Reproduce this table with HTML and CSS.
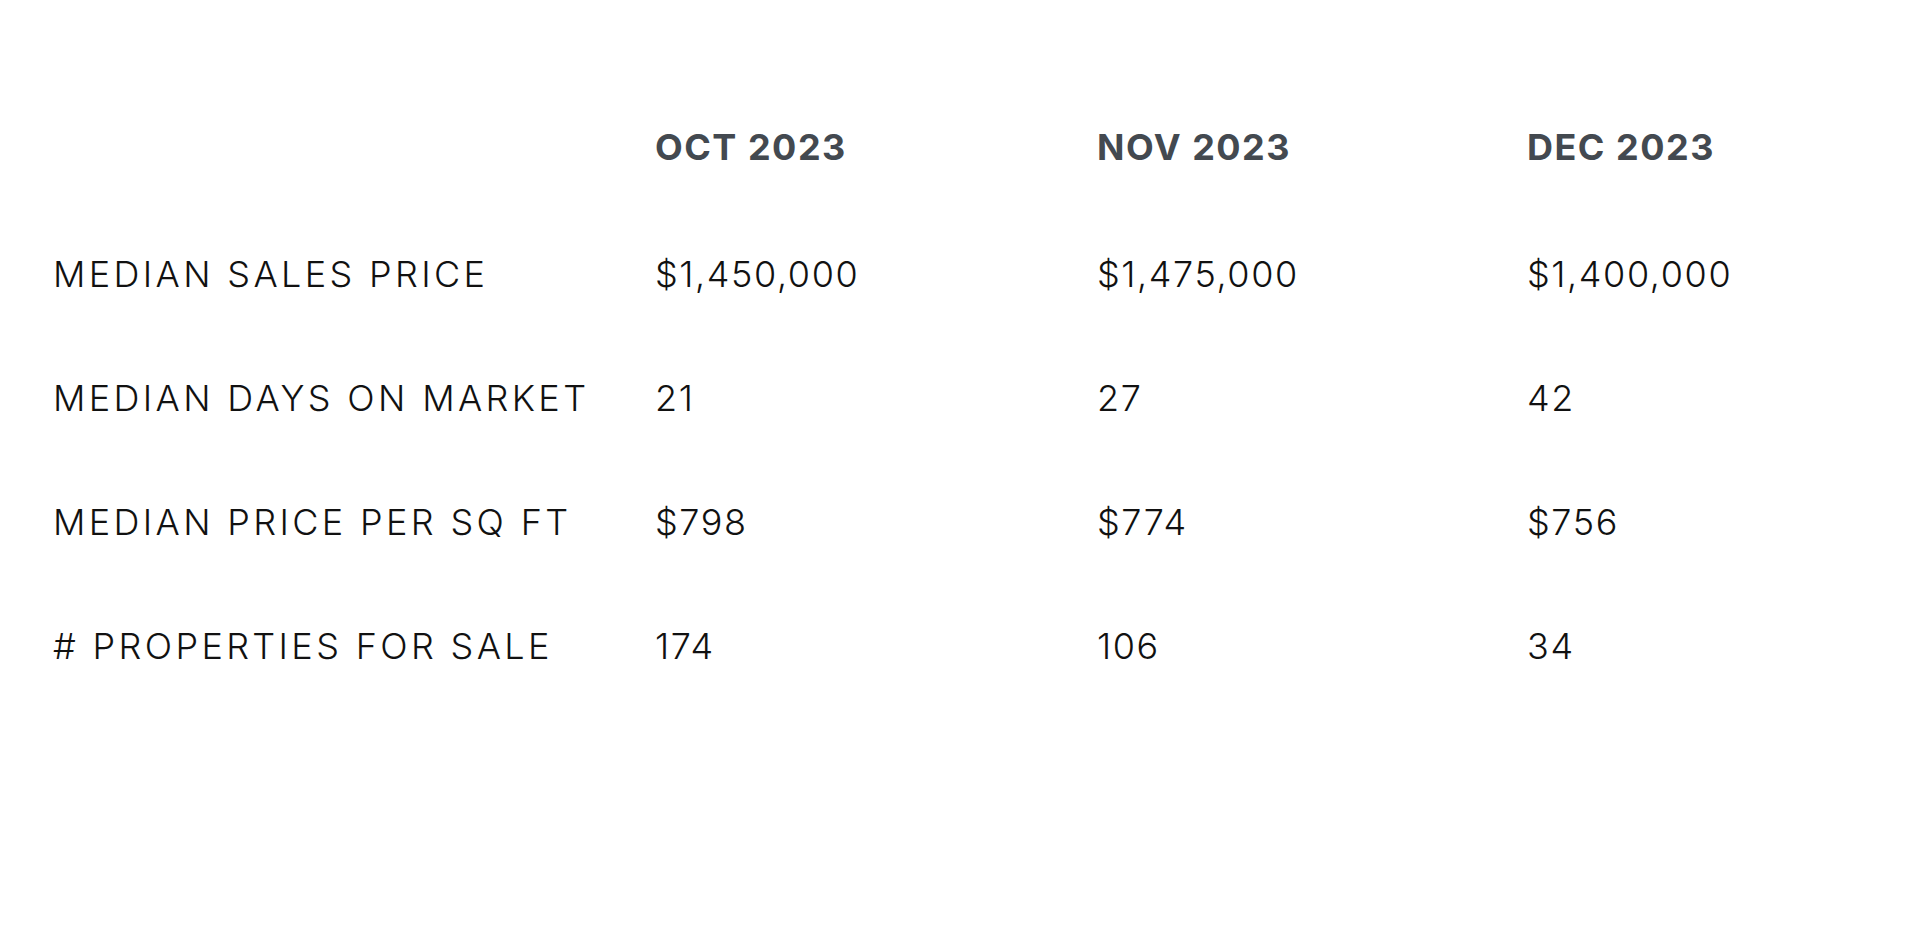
FILE: index.html
```html
<!DOCTYPE html>
<html lang="en">
<head>
<meta charset="utf-8">
<title>Market Stats</title>
<link rel="stylesheet" href="styles.css">
</head>
<body>
<div class="stats">
  <div class="row head">
    <div class="cell label"></div>
    <div class="cell">OCT 2023</div>
    <div class="cell">NOV 2023</div>
    <div class="cell">DEC 2023</div>
  </div>
  <div class="row">
    <div class="cell label">MEDIAN SALES PRICE</div>
    <div class="cell">$1,450,000</div>
    <div class="cell">$1,475,000</div>
    <div class="cell">$1,400,000</div>
  </div>
  <div class="row">
    <div class="cell label">MEDIAN DAYS ON MARKET</div>
    <div class="cell">21</div>
    <div class="cell">27</div>
    <div class="cell">42</div>
  </div>
  <div class="row">
    <div class="cell label">MEDIAN PRICE PER SQ FT</div>
    <div class="cell">$798</div>
    <div class="cell">$774</div>
    <div class="cell">$756</div>
  </div>
  <div class="row">
    <div class="cell label"># PROPERTIES FOR SALE</div>
    <div class="cell">174</div>
    <div class="cell">106</div>
    <div class="cell">34</div>
  </div>
</div>
</body>
</html>
```
FILE: styles.css
```css
html, body {
  margin: 0;
  padding: 0;
  background: #ffffff;
}
body {
  font-family: Inter, "Open Sans", "Liberation Sans", sans-serif;
  color: #111111;
}
.stats {
  padding: 85px 0 0 53px;
}
.row {
  display: grid;
  grid-template-columns: 602px 442px 430px 1fr;
  height: 124px;
  align-items: center;
  font-size: 36px;
  font-weight: 300;
  line-height: 124px;
  letter-spacing: 1.6px;
}
.row.head {
  height: 127px;
  line-height: 124px;
  align-items: start;
  font-weight: 700;
  color: #434950;
  letter-spacing: 1.5px;
}
.cell {
  white-space: nowrap;
}
.cell.label {
  letter-spacing: 3.35px;
}
```
